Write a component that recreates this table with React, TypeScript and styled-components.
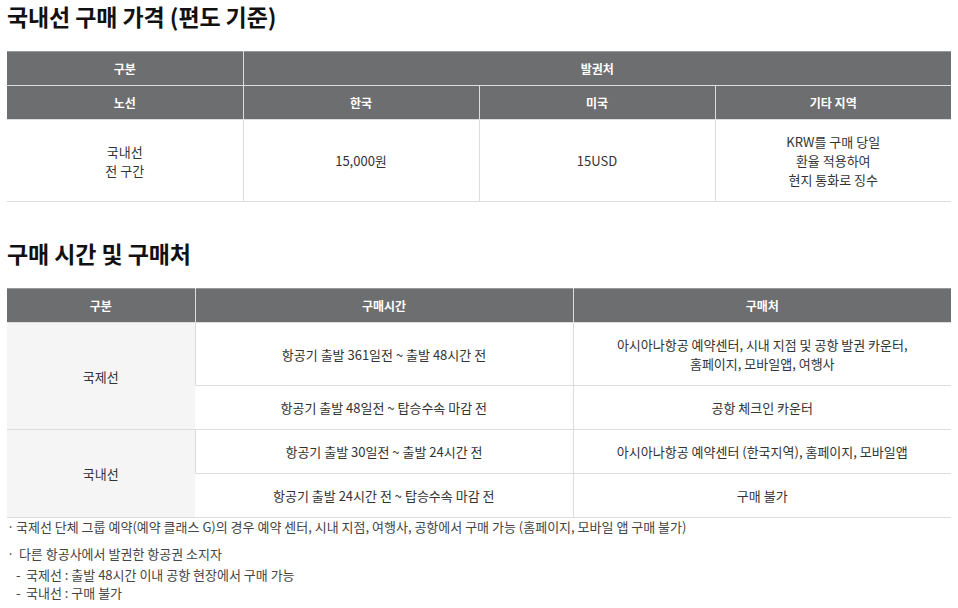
import React from 'react';
import styled, { createGlobalStyle } from 'styled-components';

const GlobalStyle = createGlobalStyle`
  body {
    margin: 0;
    background: #fff;
    font-family: "Noto Sans CJK KR", "Noto Sans", sans-serif;
    color: #333;
  }
`;

const Page = styled.div`
  padding: 0 7px;
  width: 944px;
`;

const Heading = styled.h2<{ $top: number }>`
  margin: ${p => p.$top}px 0 0;
  font-size: 23px;
  font-weight: 700;
  line-height: 32px;
  color: #111;
  letter-spacing: -0.1px;
`;

const Table = styled.table<{ $top: number }>`
  width: 100%;
  margin-top: ${p => p.$top}px;
  border-collapse: collapse;
  table-layout: fixed;
  border-top: 1px solid #999;
  font-size: 13px;
`;

const Th = styled.th`
  background: #6d6e70;
  color: #fff;
  font-weight: 700;
  font-size: 12px;
  line-height: 19px;
  padding: 7px 10px;
  border-left: 1px solid #ddd;
  border-bottom: 1px solid #ddd;
  &:first-child { border-left: none; }
`;

const Td = styled.td<{ $shade?: boolean }>`
  background: ${p => (p.$shade ? '#f5f5f5' : '#fff')};
  text-align: center;
  line-height: 19px;
  padding: 12px 10px;
  border-left: 1px solid #ddd;
  border-bottom: 1px solid #ddd;
  color: #333;
  &:first-child { border-left: none; }
`;

const Notes = styled.ul`
  list-style: none;
  margin: -1px 0 0;
  padding: 0;
  font-size: 13px;
  color: #444;
`;

const Note = styled.li<{ $gap?: number }>`
  position: relative;
  padding-left: 9px;
  line-height: 20px;
  margin-top: ${p => p.$gap ?? 0}px;
  &::before {
    content: '·';
    position: absolute;
    left: 0;
    top: 0;
  }
`;

const SubList = styled.ul`
  list-style: none;
  margin: 2px 0 0;
  padding: 0;
`;

const SubItem = styled.li`
  position: relative;
  padding-left: 10px;
  line-height: 18px;
  &::before {
    content: '-';
    position: absolute;
    left: 0;
  }
`;

export default function App() {
  return (
    <>
      <GlobalStyle />
      <Page>
        <Heading $top={0}>국내선 구매 가격 (편도 기준)</Heading>
        <Table $top={19}>
          <thead>
            <tr>
              <Th>구분</Th>
              <Th colSpan={3}>발권처</Th>
            </tr>
            <tr>
              <Th>노선</Th>
              <Th>한국</Th>
              <Th>미국</Th>
              <Th>기타 지역</Th>
            </tr>
          </thead>
          <tbody>
            <tr>
              <Td>국내선<br />전 구간</Td>
              <Td>15,000원</Td>
              <Td>15USD</Td>
              <Td>KRW를 구매 당일<br />환율 적용하여<br />현지 통화로 징수</Td>
            </tr>
          </tbody>
        </Table>

        <Heading $top={35}>구매 시간 및 구매처</Heading>
        <Table $top={19}>
          <colgroup>
            <col style={{ width: 188 }} />
            <col style={{ width: 378 }} />
            <col />
          </colgroup>
          <thead>
            <tr>
              <Th>구분</Th>
              <Th>구매시간</Th>
              <Th>구매처</Th>
            </tr>
          </thead>
          <tbody>
            <tr>
              <Td $shade rowSpan={2}>국제선</Td>
              <Td>항공기 출발 361일전 ~ 출발 48시간 전</Td>
              <Td>아시아나항공 예약센터, 시내 지점 및 공항 발권 카운터,<br />홈페이지, 모바일앱, 여행사</Td>
            </tr>
            <tr>
              <Td>항공기 출발 48일전 ~ 탑승수속 마감 전</Td>
              <Td>공항 체크인 카운터</Td>
            </tr>
            <tr>
              <Td $shade rowSpan={2}>국내선</Td>
              <Td>항공기 출발 30일전 ~ 출발 24시간 전</Td>
              <Td>아시아나항공 예약센터 (한국지역), 홈페이지, 모바일앱</Td>
            </tr>
            <tr>
              <Td>항공기 출발 24시간 전 ~ 탑승수속 마감 전</Td>
              <Td>구매 불가</Td>
            </tr>
          </tbody>
        </Table>

        <Notes>
          <Note>국제선 단체 그룹 예약(예약 클래스 G)의 경우 예약 센터, 시내 지점, 여행사, 공항에서 구매 가능 (홈페이지, 모바일 앱 구매 불가)</Note>
          <Note $gap={7}>
            &nbsp;다른 항공사에서 발권한 항공권 소지자
            <SubList>
              <SubItem>국제선 : 출발 48시간 이내 공항 현장에서 구매 가능</SubItem>
              <SubItem>국내선 : 구매 불가</SubItem>
            </SubList>
          </Note>
        </Notes>
      </Page>
    </>
  );
}
